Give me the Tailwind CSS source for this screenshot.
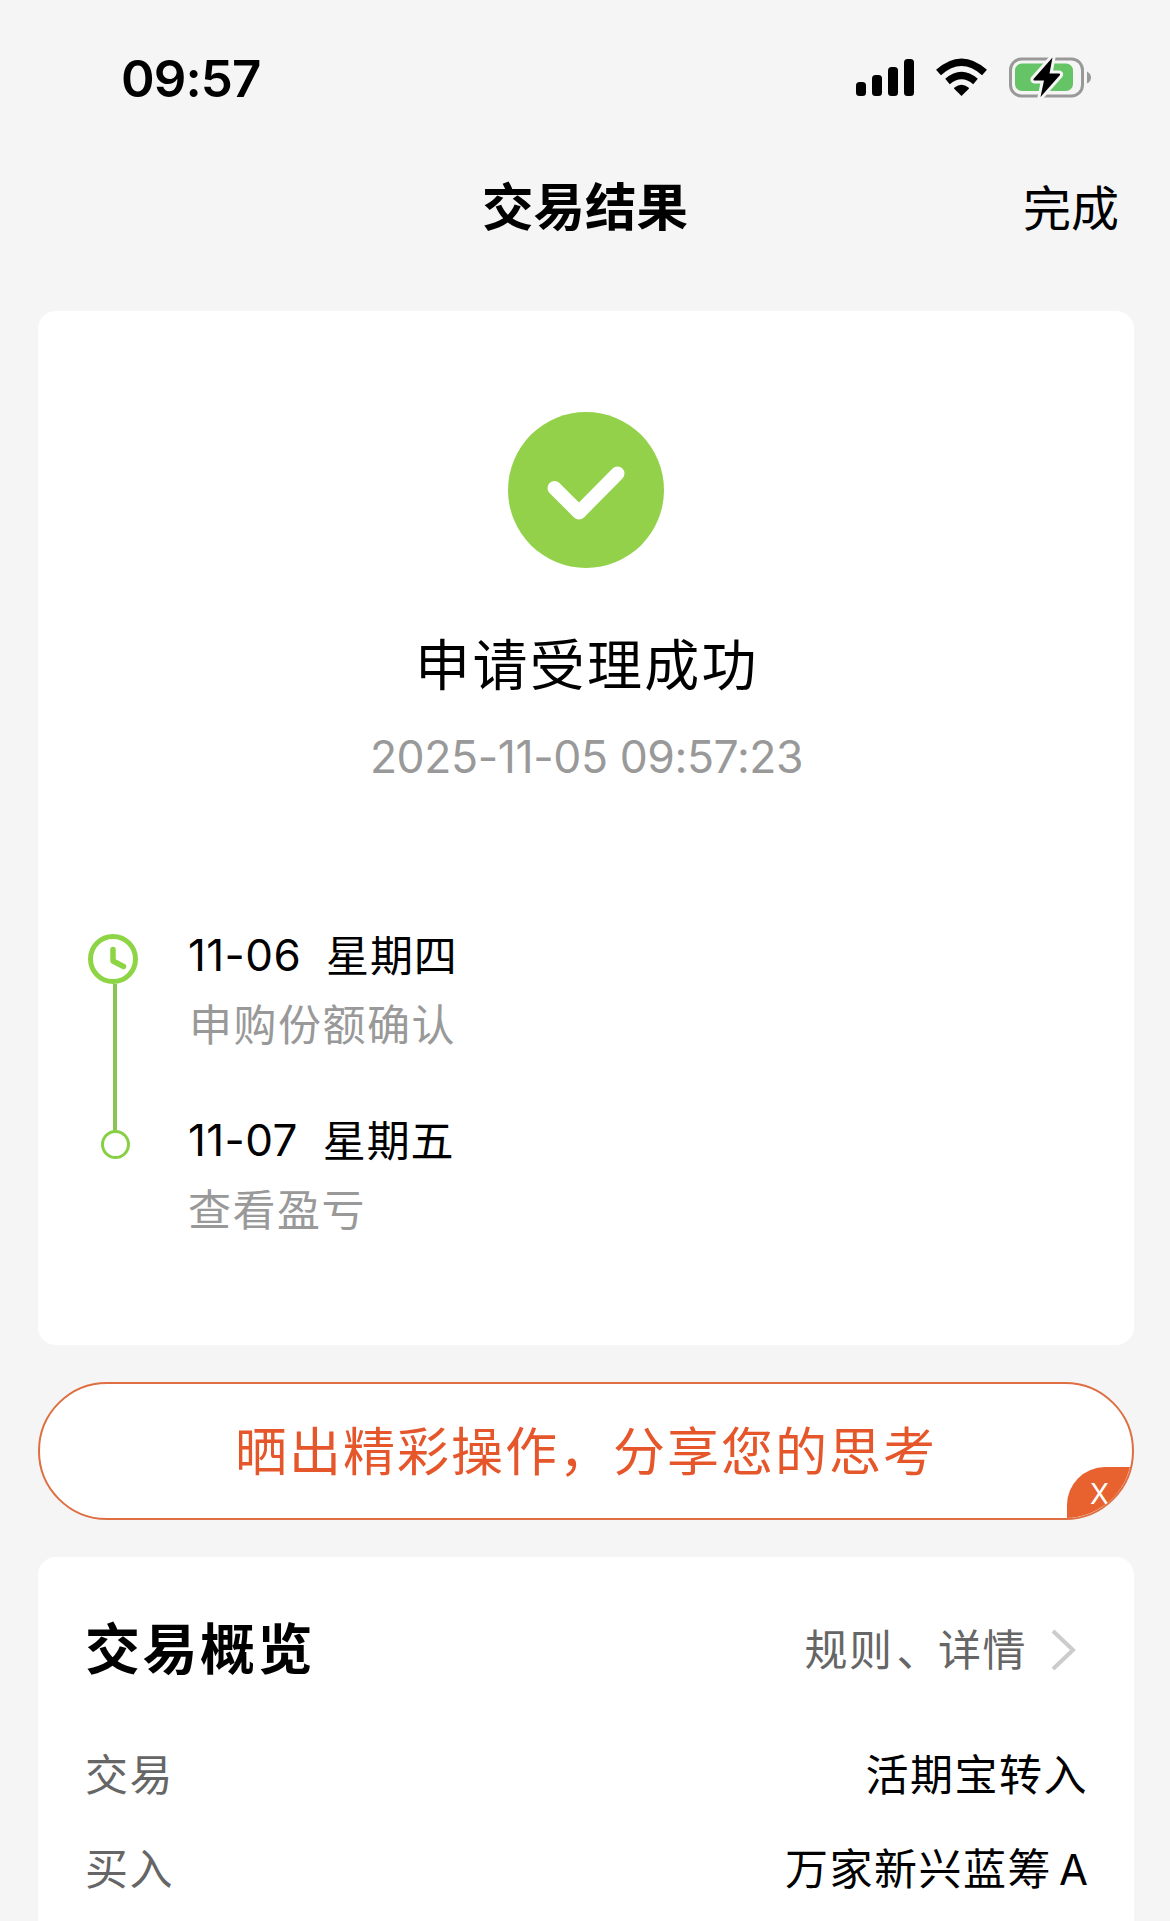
<!DOCTYPE html>
<html lang="zh-CN">
  <head>
    <meta charset="UTF-8" />
    <meta name="viewport" content="width=device-width, initial-scale=1.0" />
    <title>交易结果</title>
    <script src="https://cdn.jsdelivr.net/npm/@tailwindcss/browser@4"></script>
  </head>

  <body class="w-[1170px] h-[1921px] overflow-hidden bg-[#f5f5f5] text-black font-['Inter','Noto_Sans_CJK_SC',sans-serif]">
    <!-- status bar -->
    <div class="flex items-center justify-between h-[156px] pl-[121px] pr-[78px]">
      <span class="pt-px text-[51px] leading-[60px] font-semibold tracking-[-0.9px]">09:57</span>
      <div class="flex items-center">
        <svg class="w-[58px] h-[40px]" viewBox="0 0 58 40">
          <rect x="0" y="24" width="10" height="14" rx="3.500" />
          <rect x="16" y="17" width="10" height="21" rx="3.500" />
          <rect x="32" y="9" width="10" height="29" rx="3.500" />
          <rect x="48" y="1" width="10" height="37" rx="3.500" />
        </svg>
        <svg class="ml-[22px] w-[51px] h-[40px]" viewBox="0 0 51 40">
          <path d="M25.500 38L18.200 30.800Q17.600 30.100 18.500 29.400Q25.500 24.200 32.500 29.400Q33.400 30.100 32.800 30.800Z" />
          <path d="M11.500 23.500Q25.500 11.500 39.500 23.500" fill="none" stroke="#000" stroke-width="7" />
          <path d="M2.500 14.500Q25.500 -6 48.500 14.500" fill="none" stroke="#000" stroke-width="7.400" />
        </svg>
        <svg class="ml-[22px] w-[83px] h-[42px]" viewBox="0 0 83 42">
          <rect x="1.500" y="2" width="72" height="37" rx="11" fill="none" stroke="#999" stroke-width="3" />
          <rect x="6" y="6.500" width="58" height="27.500" rx="7" fill="#65c466" />
          <path d="M78 14.500Q82 16.500 82 20.500T78 26.500Z" fill="#999" />
          <path d="M43.500 .5L24.500 22Q24 23.500 25.500 23.500H35L31.500 40L51 18Q51.500 16.500 50 16.500H40.500Z" stroke="#f5f5f5" stroke-width="6" stroke-linejoin="round" />
          <path d="M43.500 .5L24.500 22Q24 23.500 25.500 23.500H35L31.500 40L51 18Q51.500 16.500 50 16.500H40.500Z" />
        </svg>
      </div>
    </div>

    <!-- nav -->
    <header class="grid grid-cols-3 items-center h-[100px] px-[51px]">
      <span></span>
      <h1 class="pt-0.5 text-center text-[51.5px] leading-[60px] font-bold">交易结果</h1>
      <span class="pt-[5px] text-right text-[48px] leading-[60px]">完成</span>
    </header>

    <main class="flex flex-col gap-[37px] pt-[55px] pl-[38px] pr-9">
      <section class="h-[1034px] rounded-[18px] bg-white pt-[101px]">
        <div class="flex flex-col items-center">
          <svg class="w-[156px] h-[156px]" viewBox="0 0 156 156">
            <circle cx="78" cy="78" r="78" fill="#93d14a" />
            <path d="M46.500 76L71 100.500L109.500 61.500" fill="none" stroke="#fff" stroke-width="14" stroke-linecap="round" stroke-linejoin="round" />
          </svg>
          <h2 class="mt-[62px] pl-[2px] text-[55px] leading-[70px] tracking-[2.3px]">申请受理成功</h2>
          <p class="mt-[27px] pl-px text-[44.5px] leading-[60px] tracking-[-0.4px] text-[#999]">2025-11-05 09:57:23</p>
        </div>

        <!-- timeline -->
        <div class="flex mt-[138px] pl-[50px]">
          <div class="flex flex-col items-center w-[54px] pt-[9px]">
            <svg class="w-[50px] h-[50px] -ml-1" viewBox="0 0 50 50" fill="none" stroke="#8dd544" stroke-linecap="round" stroke-linejoin="round">
              <circle cx="25" cy="25" r="22.500" stroke-width="5" />
              <path d="M25 15.500V27L35.500 32.500" stroke-width="5.500" />
            </svg>
            <span class="w-1 h-[147px] bg-[#87c653]"></span>
            <span class="-mt-px w-[29px] h-[29px] rounded-full border-3 border-[#87cf45]"></span>
          </div>
          <div class="flex flex-col gap-[55px] pl-[46px] text-[43px] leading-[60px]">
            <div>
              <p class="flex h-[60px] gap-[25px] tracking-[0.8px]"><span class="text-[44px] tracking-[0.4px]">11-06</span><span class="pt-px">星期四</span></p>
              <p class="mt-2.5 pl-px tracking-[1.5px] text-[#999]">申购份额确认</p>
            </div>
            <div>
              <p class="flex h-[60px] gap-[25px] tracking-[0.8px]"><span class="text-[44px] tracking-[0.4px]">11-07</span><span class="pt-px">星期五</span></p>
              <p class="mt-2.5 tracking-[1.5px] text-[#999]">查看盈亏</p>
            </div>
          </div>
        </div>
      </section>

      <!-- share banner -->
      <div class="relative flex items-center justify-center h-[138px] rounded-full overflow-hidden border-2 border-[#dd6f42] bg-white pt-[3px] text-[52px] leading-[60px] tracking-[2px] text-[#e6562b]">
        晒出精彩操作，分享您的思考
        <button class="absolute -right-[2px] -bottom-[2px] w-[67px] h-[53px] rounded-tl-[38px] bg-[#e8622f] pr-[2px] text-center text-[28px] leading-[54px] tracking-[0px] text-white">X</button>
      </div>

      <section class="h-[380px] rounded-t-[18px] bg-white pt-[61px] pl-[47px] pr-[46px] text-[43px] leading-[60px] tracking-[1.5px]">
        <div class="flex items-center justify-between">
          <h3 class="text-[55px] font-bold tracking-[2.5px]">交易概览</h3>
          <a class="flex items-center gap-6 pt-0.5 pr-3 text-[#666]"><span>规<span class="tracking-[4.5px]">则</span><span class="tracking-[-1.5px]">、</span>详情</span>
            <svg class="w-[25px] h-[42px]" viewBox="0 0 25 42" fill="none" stroke="#ccc" stroke-width="4">
              <path d="M2 2L22 21L2 40" />
            </svg>
          </a>
        </div>
        <div class="flex justify-between mt-[65px]"><span class="text-[#666]">交易</span><span>活期宝转入</span></div>
        <div class="flex justify-between mt-[34px]"><span class="text-[#666]">买入</span><span>万家新兴蓝筹<span class="ml-[7px] text-[42px] tracking-[0px]">A</span></span></div>
      </section>
    </main>
  </body>
</html>
